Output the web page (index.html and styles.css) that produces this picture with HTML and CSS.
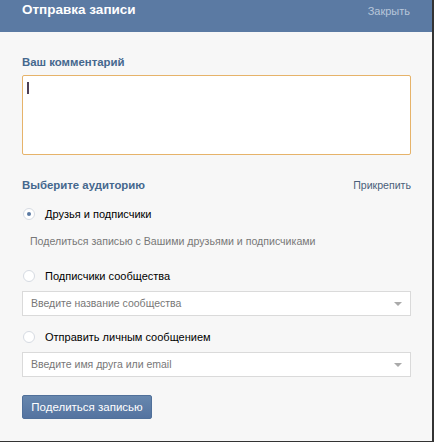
FILE: index.html
```html
<!DOCTYPE html>
<html>
<head>
	<meta charset="UTF-8">
	<title>Отправка записи</title>
	<link rel="stylesheet" href="styles.css">
</head>
<body>

<div class="box">
	<div class="head">
		<span class="title">Отправка записи</span>
		<span class="close">Закрыть</span>
	</div>
	<div class="body">
		<div class="label">Ваш комментарий</div>
		<div class="comment"><span class="cursor"></span></div>

		<div class="row">
			<span class="label">Выберите аудиторию</span>
			<span class="attach">Прикрепить</span>
		</div>

		<div class="radio on"><i></i>Друзья и подписчики</div>
		<div class="hint">Поделиться записью с Вашими друзьями и подписчиками</div>

		<div class="radio"><i></i>Подписчики сообщества</div>
		<div class="select">Введите название сообщества<b></b></div>

		<div class="radio"><i></i>Отправить личным сообщением</div>
		<div class="select">Введите имя друга или email<b></b></div>

		<div class="button">Поделиться записью</div>
	</div>
</div>

</body>
</html>
```

FILE: styles.css
```css
*{ margin: 0; padding: 0; box-sizing: border-box;}
body{ font-family: "Liberation Sans", Arial, sans-serif; font-size: 11px; color: #000; background: #fff;}

.box{ width: 434px; height: 442px; background: #f7f7f7; border-right: 2px solid #333; border-bottom: 1px solid #333;}

.head{ height: 32px; background: #5b7aa3; display: flex; justify-content: space-between; align-items: flex-start; padding: 2px 22px 0 22px;}
.head .title{ color: #fff; font-weight: bold; font-size: 13.5px; line-height: 16px;}
.head .close{ color: #b8c6da; font-size: 11px; line-height: 16px; padding-top: 1px;}

.body{ padding: 23px 21px 0 22px;}
.label{ color: #45688e; font-weight: bold; font-size: 11.4px; line-height: 14px;}

.comment{ height: 80px; margin-top: 6px; background: #fff; border: 1px solid #e6b36a; border-radius: 2px; padding: 6px 4px;}
.comment .cursor{ display: block; width: 2px; height: 12px; background: #4c3f55;}

.row{ display: flex; justify-content: space-between; align-items: center; margin-top: 23px;}
.attach{ color: #4a5f7a; font-size: 10.6px; line-height: 14px;}

.radio{ display: flex; align-items: center; height: 14px; margin-top: 15px; color: #000; line-height: 14px;}
.radio i{ width: 12px; height: 12px; margin: 0 10px 0 1px; border: 1px solid #d6dbe2; border-radius: 50%; background: #fff; position: relative;}
.radio.on i:after{ content: ""; position: absolute; left: 3px; top: 3px; width: 4px; height: 4px; border-radius: 50%; background: #5b7aa3;}

.hint{ color: #777; font-size: 10.6px; margin: 13px 0 0 8px; line-height: 14px;}
.hint + .radio{ margin-top: 21px;}

.select{ height: 25px; margin-top: 8px; border: 1px solid #dadada; background: #fff; color: #777; font-size: 10.5px; line-height: 23px; padding: 0 8px; position: relative;}
.select b{ position: absolute; right: 8px; top: 10px; border: 4px solid transparent; border-top: 4px solid #aaa; border-bottom: 0;}
.select + .radio{ margin-top: 14px;}

.button{ width: 130px; height: 24px; margin-top: 18px; line-height: 22px; text-align: center; color: #fff; border-radius: 2px; background: linear-gradient(#6787ae, #5473a0); border: 1px solid #50709a; font-size: 11.5px;}
```
